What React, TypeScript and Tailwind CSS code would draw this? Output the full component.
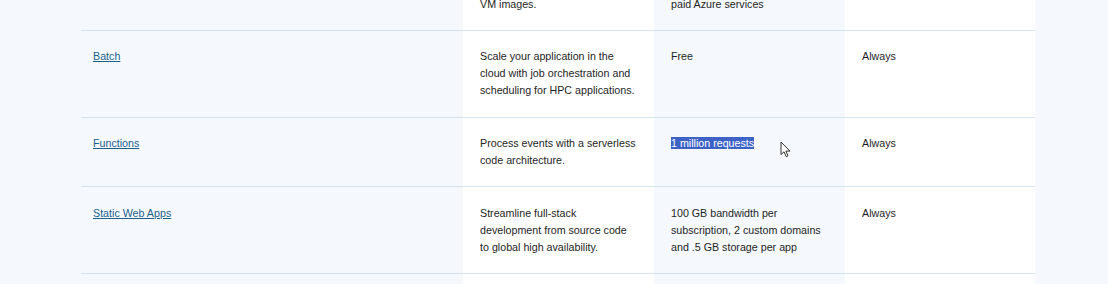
import React from 'react';

type Row = {
  name: string;
  desc: string[];
  amount: React.ReactNode[];
  duration: string;
  pad: string;
};

const rows: Row[] = [
  {
    name: 'Batch',
    desc: ['Scale your application in the', 'cloud with job orchestration and', 'scheduling for HPC applications.'],
    amount: ['Free'],
    duration: 'Always',
    pad: 'pt-[17px] pb-[18px]',
  },
  {
    name: 'Functions',
    desc: ['Process events with a serverless', 'code architecture.'],
    amount: [
      <span className="bg-[#3d62c6] text-white">1 million requests</span>,
    ],
    duration: 'Always',
    pad: 'pt-[17px] pb-[17px]',
  },
  {
    name: 'Static Web Apps',
    desc: ['Streamline full-stack', 'development from source code', 'to global high availability.'],
    amount: ['100 GB bandwidth per', 'subscription, 2 custom domains', 'and .5 GB storage per app'],
    duration: 'Always',
    pad: 'pt-[18px] pb-[17px]',
  },
];

const Lines = ({ lines }: { lines: React.ReactNode[] }) => (
  <>
    {lines.map((l, i) => (
      <span key={i} className="block whitespace-nowrap">
        {l}
      </span>
    ))}
  </>
);

const Cursor = () => (
  <svg width="11" height="17" viewBox="0 0 11 17" className="absolute left-[780px] top-[141px]">
    <path
      d="M1 1 L1 13.5 L4 10.8 L6.2 15.6 L8 14.8 L5.9 10.1 L10 10.1 Z"
      fill="#ffffff"
      stroke="#333333"
      strokeWidth="1"
      strokeLinejoin="round"
    />
  </svg>
);

export default function App() {
  return (
    <div
      className="relative w-[1108px] h-[284px] overflow-hidden bg-[#f5f9fd] text-[#1e1e1e] text-[10.7px] leading-[17px]"
      style={{ fontFamily: '"Liberation Sans", Arial, sans-serif' }}
    >
      <div className="ml-[81px] w-[954px] mt-[-4px] grid grid-cols-[382px_191px_191px_190px]">
        {/* partial row above */}
        <div className="border-b border-[#d6e4ed] pb-[17px]" />
        <div className="bg-white border-b border-[#d6e4ed] px-[17px] pb-[17px]">VM images.</div>
        <div className="border-b border-[#d6e4ed] px-[17px] pb-[17px]">paid Azure services</div>
        <div className="bg-white border-b border-[#d6e4ed] px-[17px] pb-[17px]" />

        {rows.map((r) => (
          <React.Fragment key={r.name}>
            <div className={`border-b border-[#d6e4ed] pl-[12px] ${r.pad}`}>
              <a href="#" className="text-[#1b5f8c] underline underline-offset-1">
                {r.name}
              </a>
            </div>
            <div className={`bg-white border-b border-[#d6e4ed] px-[17px] ${r.pad}`}>
              <Lines lines={r.desc} />
            </div>
            <div className={`border-b border-[#d6e4ed] px-[17px] ${r.pad}`}>
              <Lines lines={r.amount} />
            </div>
            <div className={`bg-white border-b border-[#d6e4ed] px-[17px] ${r.pad}`}>{r.duration}</div>
          </React.Fragment>
        ))}
        <div className="h-[40px]" />
        <div className="h-[40px] bg-white" />
        <div className="h-[40px]" />
        <div className="h-[40px] bg-white" />
      </div>
      <Cursor />
    </div>
  );
}
